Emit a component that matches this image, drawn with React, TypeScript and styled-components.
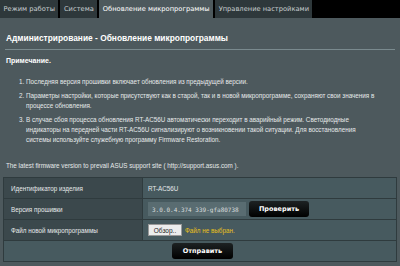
import { ReactNode } from 'react';
import styled, { createGlobalStyle } from 'styled-components';

const GlobalStyle = createGlobalStyle`
	html, body {
		margin: 0;
		padding: 0;
		background: #4d595d;
		width: 400px;
		height: 266px;
		overflow: hidden;
	}
	body {
		font-family: 'Liberation Sans', Arial, sans-serif;
		color: #fff;
	}
`;

const tabs = ['Режим работы', 'Система', 'Обновление микропрограммы', 'Управление настройками'];
const ACTIVE = 2;

const notes: ReactNode[] = [
	'Последняя версия прошивки включает обновления из предыдущей версии.',
	'Параметры настройки, которые присутствуют как в старой, так и в новой микропрограмме, сохраняют свои значения в процессе обновления.',
	<>
		В случае сбоя процесса обновления RT-AC56U автоматически переходит в аварийный режим. Светодиодные индикаторы на
		передней части RT-AC56U сигнализируют о возникновении такой ситуации. Для восстановления
		<br />
		системы используйте служебную программу Firmware Restoration.
	</>,
];

const App = () => {
	return (
		<Page>
			<GlobalStyle />
			<TabBar>
				{tabs.map((t, i) => (
					<Tab key={t} $active={i === ACTIVE}>
						{t}
					</Tab>
				))}
			</TabBar>
			<Content>
				<Title>Администрирование - Обновление микропрограммы</Title>
				<Divider />
				<NoteTitle>Примечание.</NoteTitle>
				<NoteList>
					{notes.map((n, i) => (
						<li key={i}>{n}</li>
					))}
				</NoteList>
				<SupportText>The latest firmware version to prevail ASUS support site ( http://support.asus.com ).</SupportText>
			</Content>
			<Table>
				<tbody>
					<tr>
						<Label>Идентификатор изделия</Label>
						<Value>RT-AC56U</Value>
					</tr>
					<tr>
						<Label>Версия прошивки</Label>
						<Value>
							<ValueRow>
								<VersionInput readOnly value='3.0.0.4.374_339-gfa80738' />
								<DarkButton>Проверить</DarkButton>
							</ValueRow>
						</Value>
					</tr>
					<tr>
						<Label>Файл новой микропрограммы</Label>
						<Value>
							<ValueRow>
								<BrowseButton>Обзор..</BrowseButton>
								<NoFile>Файл не выбран.</NoFile>
							</ValueRow>
						</Value>
					</tr>
					<tr>
						<Value colSpan={2}>
							<Center>
								<DarkButton $wide>Отправить</DarkButton>
							</Center>
						</Value>
					</tr>
				</tbody>
			</Table>
		</Page>
	);
};

export default App;

const Page = styled.div`
	width: 400px;
	height: 266px;
	display: flex;
	flex-direction: column;
`;

const TabBar = styled.div`
	display: flex;
	gap: 2px;
	height: 18px;
	background: #000;
`;

const Tab = styled.div<{ $active?: boolean }>`
	display: flex;
	align-items: center;
	padding: 0 3.5px;
	font-family: 'DejaVu Sans', Verdana, sans-serif;
	font-size: 6.7px;
	color: ${({ $active }) => ($active ? '#fff' : '#c7cdcf')};
	background: ${({ $active }) => ($active ? '#4d595d' : '#2e383b')};
`;

const Content = styled.div`
	padding: 0 5px 0 6px;
`;

const Title = styled.div`
	margin-top: 14px;
	font-family: 'Liberation Sans', Arial, sans-serif;
	font-size: 8.4px;
	font-weight: bold;
	color: #fff;
	line-height: 12px;
`;

const Divider = styled.div`
	margin: 5px 0 0 -1px;
	height: 1px;
	background: #7a8a8e;
`;

const NoteTitle = styled.div`
	margin-top: 6px;
	font-size: 7px;
	font-weight: bold;
	color: #fff;
	line-height: 10px;
`;

const NoteList = styled.ol`
	margin: 11px 0 0;
	padding: 0 12px 0 20px;
	font-size: 6.3px;
	line-height: 10px;
	color: #e6e9ea;
	li {
		margin-bottom: 4px;
	}
`;

const SupportText = styled.div`
	margin-top: 16px;
	font-size: 6.3px;
	line-height: 10px;
	color: #e6e9ea;
`;

const Table = styled.table`
	margin: 6px 0 0 3px;
	width: 394px;
	border-collapse: collapse;
	font-size: 6.3px;
	color: #e6e9ea;
	td {
		border: 1px solid #2f3b3e;
		height: 20px;
		padding: 0;
	}
`;

const Label = styled.td`
	width: 131px;
	padding-left: 7px !important;
	background: #3b484c;
`;

const Value = styled.td`
	padding-left: 5px !important;
	background: #475a5f;
`;

const ValueRow = styled.div`
	display: flex;
	align-items: center;
	gap: 3px;
`;

const VersionInput = styled.input`
	width: 98px;
	height: 14px;
	box-sizing: border-box;
	border: 0;
	padding: 0 4px;
	background: #596c71;
	color: #d8dcdd;
	font-family: 'DejaVu Sans Mono', monospace;
	font-size: 6px;
	outline: none;
`;

const DarkButton = styled.button<{ $wide?: boolean }>`
	width: ${({ $wide }) => ($wide ? '61px' : '60px')};
	height: 16px;
	border: 0;
	border-radius: 3px;
	background: linear-gradient(#1d2223, #000);
	color: #fff;
	font-family: 'DejaVu Sans', Verdana, sans-serif;
	font-size: 6.5px;
	font-weight: bold;
	padding: 0;
	cursor: pointer;
`;

const BrowseButton = styled.button`
	width: 34px;
	height: 12px;
	border: 1px solid #999;
	background: #eceded;
	color: #222;
	font-family: 'Liberation Sans', Arial, sans-serif;
	font-size: 6.5px;
	padding: 0;
`;

const NoFile = styled.span`
	color: #e8c01a;
`;

const Center = styled.div`
	display: flex;
	justify-content: center;
`;
